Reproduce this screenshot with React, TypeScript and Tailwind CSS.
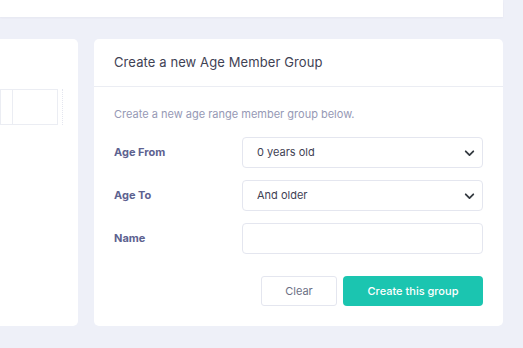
const selects = [
  { label: "Age From", value: "0 years old" },
  { label: "Age To", value: "And older" },
];

function Chevron() {
  return (
    <svg
      viewBox="0 0 16 16"
      className="pointer-events-none absolute right-[8px] top-1/2 h-[11px] w-[11px] -translate-y-1/2"
    >
      <path d="M2.5 5.5 8 11l5.5-5.5" fill="none" stroke="#343a40" strokeWidth="2.6" strokeLinecap="round" strokeLinejoin="round" />
    </svg>
  );
}

export default function App() {
  return (
    <div className="h-[348px] w-[523px] overflow-hidden bg-[#eef0f8] font-['Inter',sans-serif]">
      {/* top card edge */}
      <div className="h-[17px] w-[503px] bg-white shadow-[0_1px_2px_rgba(82,63,105,0.05)]" />

      <div className="mt-[22px] flex gap-[16px]">
        {/* left card */}
        <div className="h-[287px] w-[78px] rounded-r-[5px] bg-white pt-[50px]">
          <div className="flex">
            <div className="flex h-[36px] w-[58px] border border-[#ebedf3]">
              <div className="w-[12px] border-r border-[#ebedf3]" />
              <div className="flex-1" />
            </div>
            <div className="ml-[4px] h-[36px] border-l border-dotted border-[#e4e6ef]" />
          </div>
        </div>

        {/* right card */}
        <div className="flex h-[287px] w-[409px] flex-col rounded-[5px] bg-white">
          <div className="flex h-[48px] items-center border-b border-[#ebedf3] px-[20px]">
            <h3 className="text-[13px] font-normal tracking-[0.1px] text-[#3f4254]">
              Create a new Age Member Group
            </h3>
          </div>
          <div className="px-[20px] pt-[20px]">
            <p className="text-[11px] leading-[14px] text-[#9699b5]">
              Create a new age range member group below.
            </p>

            <div className="mt-[16px] flex flex-col gap-[12px]">
              {selects.map((s) => (
                <div key={s.label} className="flex items-center">
                  <label className="w-[128px] text-[11px] font-bold text-[#5d6290]">{s.label}</label>
                  <div className="relative">
                    <select
                      defaultValue={s.value}
                      className="h-[31px] w-[241px] appearance-none rounded-[4px] border border-[#e4e6ef] bg-white pl-[14px] text-[11px] text-[#3f4254] outline-none"
                    >
                      <option>{s.value}</option>
                    </select>
                    <Chevron />
                  </div>
                </div>
              ))}
              <div className="flex items-center">
                <label className="w-[128px] text-[11px] font-bold text-[#5d6290]">Name</label>
                <input
                  type="text"
                  className="h-[31px] w-[241px] rounded-[4px] border border-[#e4e6ef] bg-white px-[14px] text-[11px] outline-none"
                />
              </div>
            </div>

            <div className="mt-[22px] flex justify-end gap-[6px]">
              <button className="h-[30px] w-[76px] rounded-[3px] border border-[#e4e6ef] bg-white text-[11px] text-[#6c6f85]">
                Clear
              </button>
              <button className="h-[30px] w-[140px] rounded-[4px] bg-[#1bc5b0] text-[11px] font-medium text-white">
                Create this group
              </button>
            </div>
          </div>
        </div>
      </div>
    </div>
  );
}
